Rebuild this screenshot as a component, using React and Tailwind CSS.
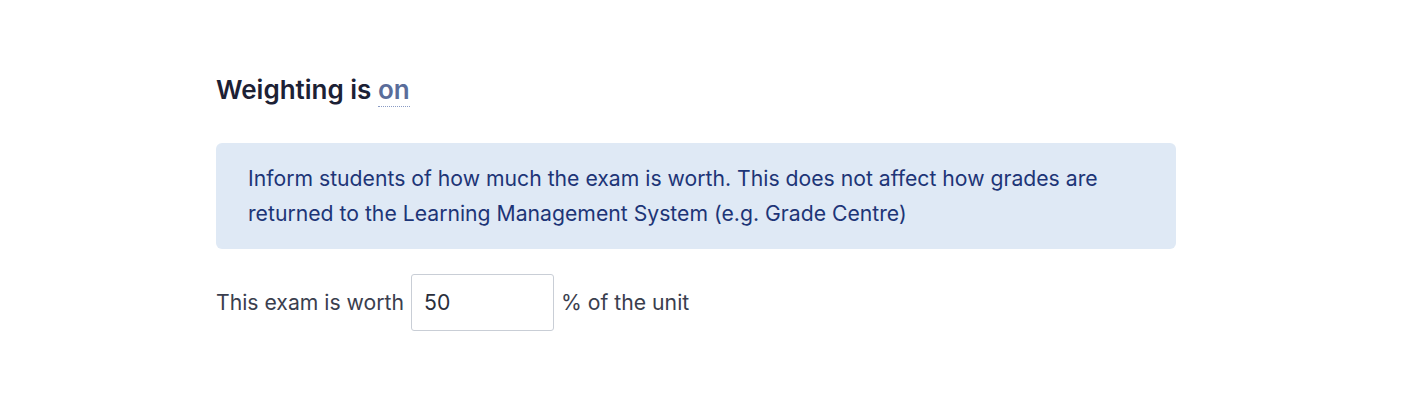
export default function App() {
  return (
    <div className="w-[1414px] h-[408px] bg-white" style={{ fontFamily: 'Inter, "Noto Sans", sans-serif' }}>
      <div className="pl-[216px] pt-[73px] w-[1176px]">
        <h2 className="text-[26px] leading-[34px] font-semibold text-[#1c2135]">
          Weighting is{" "}
          <span className="text-[#5a6d9a] border-b border-dotted border-[#8a9bc4] pb-[1px]">on</span>
        </h2>
        <div className="mt-[36px] rounded-[6px] bg-[#dfe9f5] px-[32px] py-[18px] text-[21.2px] leading-[35px] text-[#1d3577]">
          Inform students of how much the exam is worth. This does not affect how grades are returned to the Learning Management System (e.g. Grade Centre)
        </div>
        <div className="mt-[25px] flex items-center gap-[7px] text-[21.2px] text-[#3a3e4e]">
          <span>This exam is worth</span>
          <div className="w-[143px] h-[57px] border border-[#c9ced6] rounded-[3px] flex items-center px-[12px] text-[#2a2e3b]">50</div>
          <span>% of the unit</span>
        </div>
      </div>
    </div>
  );
}
